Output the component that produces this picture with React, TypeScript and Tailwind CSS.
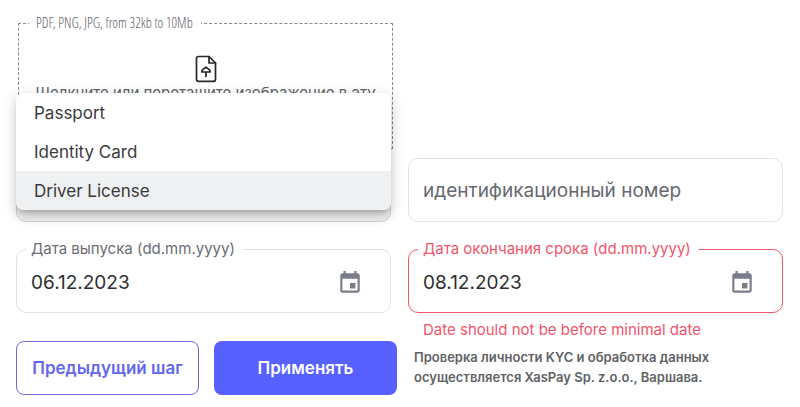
import { useState } from "react";
import { MdEvent } from "react-icons/md";
import clsx from "clsx";

const documentTypes = ["Passport", "Identity Card", "Driver License"];

interface DateFieldProps {
    id: string;
    label: string;
    defaultValue: string;
    error?: string;
}

const DateField: React.FC<DateFieldProps> = ({ id, label, defaultValue, error }) => {
    return (
        <div>
            <fieldset
                className={clsx(
                    "min-w-0 rounded-[10px] border pl-[14px] pr-[27px]",
                    error ? "border-[#ee5566]" : "border-[#e2e2e4]"
                )}
            >
                <legend
                    className={clsx(
                        "-ml-[5px] pl-[5px] pr-2 text-[15px] leading-5",
                        error ? "text-[#f0556a]" : "text-[#6b6d72]"
                    )}
                >
                    <label htmlFor={id}>{label}</label>
                </legend>
                <div className="flex h-[53px] items-center pb-1.5">
                    <input
                        id={id}
                        type="text"
                        defaultValue={defaultValue}
                        aria-invalid={!!error}
                        className="w-full min-w-0 flex-1 bg-transparent pt-0.5 text-[19px] text-[#2e2e30] outline-none"
                    />
                    <button type="button" aria-label="Choose date" className="text-[#7c7d8a]">
                        <MdEvent size={26} />
                    </button>
                </div>
            </fieldset>
            {error && (
                <p className="mt-2 px-[15px] text-[15px] leading-[18px] text-[#f0556a]">{error}</p>
            )}
        </div>
    );
};

const UploadIcon = () => (
    <svg
        width="22"
        height="28"
        viewBox="0 0 22 28"
        fill="none"
        stroke="#27272a"
        strokeWidth="1.7"
        strokeLinecap="round"
        strokeLinejoin="round"
        aria-hidden="true"
    >
        <path d="M14 1.5H3.5a2 2 0 0 0-2 2v20.800a2 2 0 0 0 2 2h15a2 2 0 0 0 2-2V8z" />
        <path d="M14 1.500V8h6.500" />
        <path d="M11 21.500V17M6.800 17c-.5-1.700 1.800-3.200 4.200-4.800 2.400 1.600 4.700 3.100 4.200 4.800z" />
    </svg>
);

const DocumentSelect = () => {
    const [selected, setSelected] = useState("Driver License");

    return (
        <div className="relative">
            <select
                aria-label="Document type"
                value={selected}
                onChange={(e) => setSelected(e.target.value)}
                className="h-16 w-full appearance-none rounded-[10px] border border-[#d4d4d6] bg-[#f5f5f6] px-[14px] text-[19px] text-[#2e2e30]"
            >
                {documentTypes.map((type) => (
                    <option key={type}>{type}</option>
                ))}
            </select>
            <div
                role="listbox"
                aria-label="Document types"
                className="absolute inset-x-0 bottom-3 z-10 overflow-hidden rounded-lg bg-white shadow-[0_5px_5px_-3px_rgba(0,0,0,0.2),0_8px_10px_1px_rgba(0,0,0,0.1),0_3px_14px_2px_rgba(0,0,0,0.1)]"
            >
                {documentTypes.map((type) => (
                    <button
                        key={type}
                        type="button"
                        role="option"
                        aria-selected={type === selected}
                        onClick={() => setSelected(type)}
                        className={clsx(
                            "block h-[39px] w-full px-[18px] pt-0.5 text-left text-[17px] text-[#3a3a3d]",
                            type === selected && "bg-[#eff0f2]"
                        )}
                    >
                        {type}
                    </button>
                ))}
            </div>
        </div>
    );
};

const App = () => {
    return (
        <form className="bg-white pb-3 pt-[14px] font-['Inter','Liberation_Sans',sans-serif]">
            <div className="grid grid-cols-2 gap-x-4 pl-[18px] pr-4">
                <fieldset className="h-[135px] min-w-0 border border-dashed border-[#8a8a8e] px-[14px]">
                    <legend className="-ml-1 pl-[7px] pr-2 font-['Open_Sans_Condensed_Light','Open_Sans_Condensed',sans-serif] text-[14px] leading-[18px] text-[#5f606b]">
                        PDF, PNG, JPG, from 32kb to 10Mb
                    </legend>
                    <button type="button" className="flex w-full flex-col items-center pt-[23px] text-[15px] leading-5 text-[#606266]">
                        <UploadIcon />
                        <span>Щелкните или перетащите изображение в эту</span>
                    </button>
                </fieldset>
            </div>

            <div className="grid grid-cols-2 gap-x-[17px] gap-y-[17px] pl-4 pr-[17px] pt-[9px]">
                <DocumentSelect />
                <input
                    type="text"
                    aria-label="идентификационный номер"
                    placeholder="идентификационный номер"
                    className="h-16 min-w-0 rounded-[10px] border border-[#e2e2e4] px-[14px] text-[19px] text-[#2e2e30] outline-none placeholder:text-[#66686e]"
                />
                <DateField id="issued" label="Дата выпуска (dd.mm.yyyy)" defaultValue="06.12.2023" />
                <DateField
                    id="expires"
                    label="Дата окончания срока (dd.mm.yyyy)"
                    defaultValue="08.12.2023"
                    error="Date should not be before minimal date"
                />
            </div>

            <div className="grid grid-cols-[183fr_183fr_371fr] gap-x-[15px] pl-4 pr-[17px] pt-0.5">
                <button
                    type="button"
                    className="h-[54px] rounded-lg border border-[#7468d8] pt-0.5 text-[17px] font-semibold text-[#6468ee]"
                >
                    Предыдущий шаг
                </button>
                <button type="submit" className="h-[54px] rounded-lg bg-[#5661ff] pt-0.5 text-[17px] font-semibold text-white">
                    Применять
                </button>
                <p className="max-w-[310px] pl-0.5 pt-[6px] text-[13px] font-semibold leading-5 text-[#606266]">
                    Проверка личности KYC и обработка данных осуществляется XasPay Sp. z.o.o., Варшава.
                </p>
            </div>
        </form>
    );
};

export default App;
